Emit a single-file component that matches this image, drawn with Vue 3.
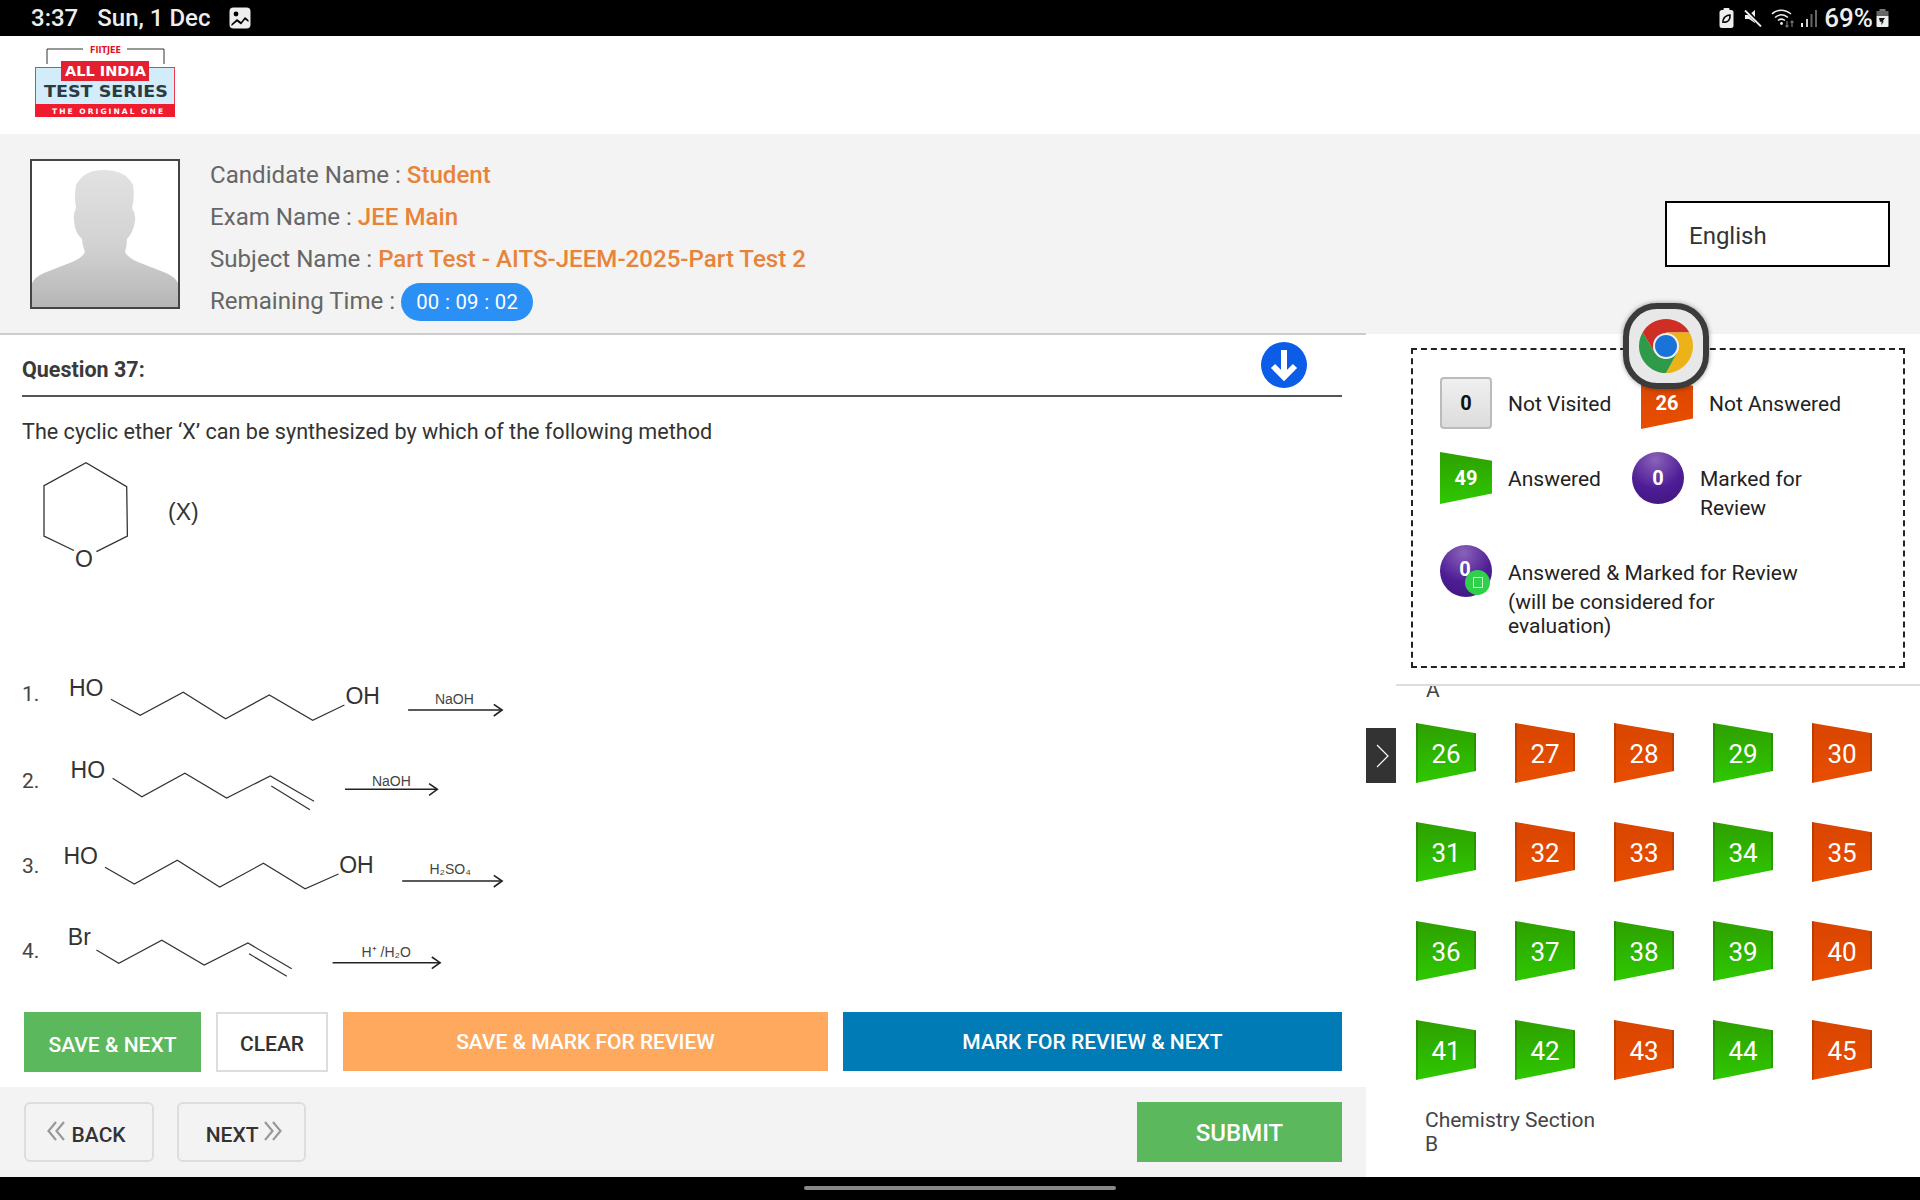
<script setup>
const greens = [26, 29, 31, 34, 36, 37, 38, 39, 41, 42, 44]
const palette = Array.from({ length: 20 }, (_, i) => ({
  n: 26 + i,
  ok: greens.includes(26 + i),
}))

const SX = 2.904
const SY = 3
const ROW_H = 85

// crop coordinates (measured on the reference) to pixels inside a row
function line(points, row) {
  return points.map(([x, y]) => `${(x / SX - 22).toFixed(1)},${(y / SY - row * ROW_H).toFixed(1)}`).join(' ')
}
function tx(x) {
  return (x / SX - 22).toFixed(1)
}
function ty(y, row) {
  return (y / SY - row * ROW_H).toFixed(1)
}
function arrow(x1, x2, y, row) {
  return {
    shaft: line([[x1, y], [x2, y]], row),
    head: line([[x2 - 24, y - 17], [x2, y], [x2 - 24, y + 18]], row),
  }
}

const options = [
  {
    n: '1.', numY: 122,
    group: 'HO', groupX: 200, groupY: 108,
    end: 'OH', endX: 1003, endY: 133,
    chain: [[322, 118], [407, 166], [532, 97], [655, 176], [782, 105], [908, 181], [1000, 135]],
    arrow: [1185, 1458, 150], reagent: 'NaOH', rX: 1263, rY: 133,
  },
  {
    n: '2.', numY: 385,
    group: 'HO', groupX: 205, groupY: 353,
    chain: [[327, 355], [412, 410], [537, 340], [658, 414], [785, 348], [912, 424]],
    dbl: [[788, 378], [900, 449]],
    arrow: [1002, 1270, 388], reagent: 'NaOH', rX: 1080, rY: 377,
  },
  {
    n: '3.', numY: 640,
    group: 'HO', groupX: 184, groupY: 613,
    end: 'OH', endX: 985, endY: 638,
    chain: [[305, 622], [390, 672], [515, 601], [638, 681], [765, 610], [886, 686], [983, 642]],
    arrow: [1168, 1458, 663], reagent: 'H₂SO₄', rX: 1247, rY: 643,
  },
  {
    n: '4.', numY: 895,
    group: 'Br', groupX: 197, groupY: 855,
    chain: [[280, 870], [345, 910], [470, 841], [593, 915], [720, 849], [847, 926]],
    dbl: [[723, 881], [833, 949]],
    arrow: [966, 1278, 908], reagent: 'H⁺ /H₂O', rX: 1050, rY: 890,
  },
].map((o, row) => ({ ...o, row, a: arrow(o.arrow[0], o.arrow[1], o.arrow[2], row) }))
</script>

<template>
  <div class="screen">
    <div class="status">
      <div class="status__left">
        <span>3:37</span>
        <span>Sun, 1 Dec</span>
        <svg width="22" height="22" viewBox="0 0 22 22">
          <rect x="0.5" y="0.5" width="21" height="21" rx="4" fill="#eee" />
          <circle cx="7" cy="7" r="2.4" fill="#000" />
          <path d="M2.5 17 L8 12 L12 15 L16 10 L19.5 13 V15 L16 12.5 L12 17.5 L8 14.5 L2.5 19 Z" fill="#000" />
        </svg>
      </div>
      <div class="status__right">
        <svg width="15" height="20" viewBox="0 0 15 20">
          <rect x="4.5" y="0" width="6" height="3" rx="1" fill="#eee" />
          <rect x="0.5" y="2" width="14" height="18" rx="2.5" fill="#eee" />
          <path d="M4 15 C3.5 9 8 7 11 7 C11.5 11 9 15 5 14" fill="none" stroke="#000" stroke-width="1.6" />
        </svg>
        <svg class="ml10" width="18" height="18" viewBox="0 0 18 18">
          <path d="M1 6 H5 L11 1 V14 L5 10 H1 Z" fill="#eee" />
          <path d="M2 1 L17 17" stroke="#000" stroke-width="3.4" />
          <path d="M1 1.5 L17 17.5" stroke="#eee" stroke-width="1.8" />
        </svg>
        <svg class="ml9" width="25" height="20" viewBox="0 0 25 20">
          <g fill="none" stroke="#eee" stroke-width="1.6">
            <path d="M1 6 C6 1 14 1 20 6" />
            <path d="M4 9.5 C8 6 13 6 17 9.5" />
            <path d="M7 12.5 C9.5 10.5 11.5 10.5 14 12.5" />
          </g>
          <circle cx="10.5" cy="15.5" r="1.4" fill="#eee" />
          <path d="M16 13 V19 M14.5 17.5 L16 19 L17.5 17.5" fill="none" stroke="#777" stroke-width="1.2" />
          <path d="M21 19 V13 M19.5 14.5 L21 13 L22.5 14.5" fill="none" stroke="#777" stroke-width="1.2" />
        </svg>
        <svg class="ml5" width="16" height="18" viewBox="0 0 16 18">
          <rect x="0" y="14" width="2" height="4" fill="#eee" />
          <rect x="5" y="10" width="2" height="8" fill="#ccc" />
          <rect x="9.5" y="5" width="2" height="13" fill="#666" />
          <rect x="14" y="1" width="2" height="17" fill="#666" />
        </svg>
        <span class="status__pct">69%</span>
        <svg class="ml3" width="13" height="18" viewBox="0 0 13 18">
          <rect x="3.5" y="0" width="6" height="2" fill="#777" />
          <rect x="0.5" y="2" width="12" height="6" fill="#666" />
          <rect x="0.5" y="7" width="12" height="11" rx="1" fill="#eee" />
          <path d="M3 9 H9 L6.5 12.5 H8 L5 16 L5.8 12.8 H4 Z" fill="#111" />
        </svg>
      </div>
    </div>

    <header class="brand">
      <svg width="142" height="76" viewBox="0 0 142 76">
        <path d="M12 18 V3 H48 M92 3 H129 V18" fill="none" stroke="#333" stroke-width="1" />
        <text class="lg lg--fiit" x="55" y="7" textLength="31" lengthAdjust="spacingAndGlyphs">FIITJEE</text>
        <rect x="0.5" y="21.5" width="139" height="49" fill="#d3ecfa" stroke="#ee3b4a" />
        <rect x="0" y="58" width="140" height="13" fill="#ee1c2e" />
        <rect x="26" y="15" width="88" height="20" fill="#e3202f" />
        <text class="lg lg--all" x="30" y="30" textLength="81" lengthAdjust="spacingAndGlyphs">ALL INDIA</text>
        <text class="lg lg--test" x="9" y="51" textLength="124" lengthAdjust="spacingAndGlyphs">TEST SERIES</text>
        <text class="lg lg--orig" x="17" y="68" textLength="111">THE ORIGINAL ONE</text>
      </svg>
    </header>

    <section class="info">
      <div class="avatar">
        <svg width="146" height="146" viewBox="0 0 146 146">
          <defs>
            <linearGradient id="sil" x1="0" y1="0" x2="0" y2="1">
              <stop offset="0" stop-color="#e2e2e2" />
              <stop offset="0.55" stop-color="#d2d2d2" />
              <stop offset="1" stop-color="#b6b6b6" />
            </linearGradient>
          </defs>
          <path
            d="M0 146 V122 Q3 116 12 112 L40 101 Q50 97 53 91 Q50 84 50 78 Q43 72 42 60 Q41 53 44 47 Q42 36 44 24 Q52 9 71 9 Q94 9 101 24 Q103 36 100 47 Q104 53 103 60 Q101 72 95 78 Q95 85 93 91 Q96 97 106 101 L134 112 Q143 116 146 122 V146 Z"
            fill="url(#sil)"
          />
        </svg>
      </div>
      <div class="details">
        <div class="details__row">Candidate Name : <b>Student</b></div>
        <div class="details__row">Exam Name : <b>JEE Main</b></div>
        <div class="details__row">Subject Name : <b>Part Test - AITS-JEEM-2025-Part Test 2</b></div>
        <div class="details__row">Remaining Time : <span class="timer">00 : 09 : 02</span></div>
      </div>
      <div class="lang">English</div>
    </section>

    <main class="main">
      <div class="left">
        <div class="qhead">
          <span class="qhead__title">Question 37:</span>
          <svg class="qhead__down" width="46" height="46" viewBox="0 0 46 46">
            <circle cx="23" cy="23" r="23" fill="#0b5ce6" />
            <path d="M23 8 V34 M12 24 L23 35 L34 24" fill="none" stroke="#fff" stroke-width="6" />
          </svg>
        </div>
        <p class="qtext">The cyclic ether ‘X’ can be synthesized by which of the following method</p>

        <svg class="ring" width="200" height="120" viewBox="22 460 200 120">
          <polyline
            points="74,550.5 44,536 44,485.7 86,462.7 126.7,486.7 127.4,536 96.4,551.7"
            fill="none" stroke="#333" stroke-width="1.3"
          />
          <text class="chem" x="75" y="566.5">O</text>
          <text class="chem" x="168" y="520">(X)</text>
        </svg>

        <div class="options">
          <svg v-for="o in options" :key="o.n" class="opt" width="500" :height="ROW_H" viewBox="0 0 500 85">
            <text class="opt__n" x="0" :y="ty(o.numY, o.row)">{{ o.n }}</text>
            <text class="chem" :x="tx(o.groupX)" :y="ty(o.groupY, o.row)">{{ o.group }}</text>
            <text v-if="o.end" class="chem" :x="tx(o.endX)" :y="ty(o.endY, o.row)">{{ o.end }}</text>
            <polyline :points="line(o.chain, o.row)" fill="none" stroke="#333" stroke-width="1.2" />
            <polyline v-if="o.dbl" :points="line(o.dbl, o.row)" fill="none" stroke="#333" stroke-width="1.2" />
            <polyline :points="o.a.shaft" fill="none" stroke="#222" stroke-width="1.6" />
            <polyline :points="o.a.head" fill="none" stroke="#222" stroke-width="1.6" />
            <text class="reagent" :x="tx(o.rX)" :y="ty(o.rY, o.row)">{{ o.reagent }}</text>
          </svg>
        </div>

        <div class="actions">
          <button class="btn btn--green btn--save">SAVE &amp; NEXT</button>
          <button class="btn btn--clear">CLEAR</button>
          <button class="btn btn--orange">SAVE &amp; MARK FOR REVIEW</button>
          <button class="btn btn--blue">MARK FOR REVIEW &amp; NEXT</button>
        </div>

        <div class="footer">
          <button class="btn btn--nav btn--back">
            <svg class="chev" width="19" height="20" viewBox="0 0 19 20">
              <path d="M9 1 L1.5 10 L9 19 M17 1 L9.5 10 L17 19" fill="none" stroke="#999" stroke-width="2.2" />
            </svg>
            BACK
          </button>
          <button class="btn btn--nav btn--next">
            NEXT
            <svg class="chev" width="19" height="20" viewBox="0 0 19 20">
              <path d="M2 1 L9.5 10 L2 19 M10 1 L17.5 10 L10 19" fill="none" stroke="#999" stroke-width="2.2" />
            </svg>
          </button>
          <button class="btn btn--green btn--submit">SUBMIT</button>
        </div>
      </div>

      <aside class="right">
        <button class="toggle" aria-label="Collapse">
          <svg width="14" height="24" viewBox="0 0 14 24">
            <path d="M1 1 L12 12 L1 23" fill="none" stroke="#fff" stroke-width="1.2" />
          </svg>
        </button>

        <div class="legend">
          <div class="legend__row">
            <div class="item item--first">
              <span class="tag tag--none">0</span>
              <span class="item__label">Not Visited</span>
            </div>
            <div class="item">
              <span class="tag tag--red tag--small">26</span>
              <span class="item__label">Not Answered</span>
            </div>
          </div>
          <div class="legend__row legend__row--two">
            <div class="item item--second">
              <span class="tag tag--green tag--small">49</span>
              <span class="item__label">Answered</span>
            </div>
            <div class="item item--top">
              <span class="tag tag--purple">0</span>
              <span class="item__wrap">Marked for Review</span>
            </div>
          </div>
          <div class="legend__row legend__row--three">
            <div class="item item--top">
              <span class="tag tag--purple tag--badge">
                <span class="tag__zero">0</span>
                <span class="badge"><i></i></span>
              </span>
              <div class="item__long">
                <div>Answered &amp; Marked for Review</div>
                <div class="item__note">(will be considered for evaluation)</div>
              </div>
            </div>
          </div>
        </div>

        <div class="palette">
          <div class="palette__inner">
            <div class="section section--a">A</div>
            <div class="grid">
              <span v-for="p in palette" :key="p.n" class="cell" :class="p.ok ? 'cell--ok' : 'cell--no'">{{ p.n }}</span>
            </div>
            <div class="section section--next">Chemistry Section B</div>
          </div>
        </div>
      </aside>
    </main>

    <div class="navbar"><span class="navbar__pill"></span></div>

    <div class="bubble">
      <svg width="58" height="58" viewBox="-29 -29 58 58">
        <path d="M-23.4 -13.5 A27 27 0 0 1 23.4 -13.5 L0 -13.5 L-11.3 6.5 Z" fill="#cf2e24" />
        <path d="M23.4 -13.5 A27 27 0 0 1 0 27 L11.3 6.5 L0 -13.5 Z" fill="#ecb318" />
        <path d="M0 27 A27 27 0 0 1 -23.4 -13.5 L-11.3 6.5 L11.3 6.5 Z" fill="#2f9a47" />
        <circle r="13" fill="#f1f1f1" />
        <circle r="11" fill="#1a73d8" />
      </svg>
    </div>
  </div>
</template>

<style>
html,
body {
  margin: 0;
  background: #000;
}
</style>

<style scoped>
.screen {
  position: relative;
  width: 1920px;
  height: 1200px;
  overflow: hidden;
  display: flex;
  flex-direction: column;
  background: #fff;
  font-family: Roboto, "Liberation Sans", sans-serif;
  color: #333;
}

.status {
  height: 36px;
  flex: none;
  background: #000;
  color: #eee;
  display: flex;
  align-items: center;
  justify-content: space-between;
  padding: 0 31px;
  font-size: 24px;
  font-weight: 500;
  box-sizing: border-box;
}
.status__left {
  display: flex;
  align-items: center;
  gap: 19px;
}
.status__right {
  display: flex;
  align-items: center;
}
.status__pct {
  margin-left: 7px;
  font-size: 26px;
}
.ml3 { margin-left: 3px; }
.ml5 { margin-left: 5px; }
.ml9 { margin-left: 9px; }
.ml10 { margin-left: 10px; }

.brand {
  height: 98px;
  flex: none;
  padding: 10px 0 0 35px;
  box-sizing: border-box;
}
.lg {
  font-family: "DejaVu Sans", sans-serif;
  font-weight: 700;
}
.lg--fiit { font-size: 8px; fill: #e2121f; }
.lg--all { font-size: 14px; fill: #fff; }
.lg--test { font-size: 15px; fill: #2d3a40; }
.lg--orig { font-size: 7.5px; fill: #fff; }

.info {
  height: 200px;
  flex: none;
  background: #f3f3f3;
  display: flex;
  padding: 25px 30px 0;
  box-sizing: border-box;
}
.avatar {
  width: 146px;
  height: 146px;
  border: 2px solid #444;
  background: #fff;
}
.avatar svg {
  display: block;
}
.details {
  margin-left: 30px;
  font-size: 24.1px;
  color: #666;
}
.details__row {
  height: 42px;
  line-height: 32px;
}
.details b {
  color: #e8833a;
  font-weight: 500;
}
.timer {
  display: inline-block;
  margin-top: -2px;
  background: #2b90f5;
  color: #fff;
  border-radius: 19px;
  font-size: 20.3px;
  line-height: 38px;
  padding: 0 15px;
  vertical-align: top;
  letter-spacing: 0.3px;
}
.lang {
  margin: 42px 0 0 auto;
  width: 225px;
  height: 66px;
  box-sizing: border-box;
  border: 2px solid #000;
  background: #fff;
  font-size: 24px;
  line-height: 66px;
  padding-left: 22px;
  color: #333;
}

.main {
  flex: 1;
  display: flex;
  min-height: 0;
}
.left {
  width: 1366px;
  flex: none;
  border-top: 2px solid #ccc;
  margin-top: -1px;
  box-sizing: border-box;
  display: flex;
  flex-direction: column;
}
.qhead {
  height: 62px;
  flex: none;
  margin: 0 24px 0 22px;
  border-bottom: 2px solid #555;
  display: flex;
  align-items: center;
  justify-content: space-between;
  box-sizing: border-box;
  position: relative;
}
.qhead__title {
  font-size: 21.5px;
  font-weight: 700;
  color: #3a3a3a;
  margin-top: 8px;
}
.qhead__down {
  position: absolute;
  left: 1239px;
  top: 7px;
}
.qtext {
  margin: 23px 0 0 22px;
  font-size: 21.6px;
  line-height: 24px;
  color: #333;
}
.ring {
  display: block;
  flex: none;
  margin: 16px 0 0 22px;
}
.chem {
  font-family: "Liberation Sans", Arial, sans-serif;
  font-size: 23px;
  fill: #333;
}
.options {
  margin: 80px 0 0 22px;
  display: flex;
  flex-direction: column;
}
.opt {
  display: block;
  flex: none;
}
.opt__n {
  font-family: Roboto, sans-serif;
  font-size: 21px;
  fill: #444;
}
.reagent {
  font-family: "Liberation Sans", Arial, sans-serif;
  font-size: 14px;
  fill: #444;
}

.actions {
  margin-top: 12px;
  height: 60px;
  flex: none;
  padding-left: 24px;
  display: flex;
}
.btn {
  font-family: Roboto, sans-serif;
  font-weight: 500;
  font-size: 21px;
  border: 0;
  padding: 0;
  box-sizing: border-box;
  cursor: pointer;
}
.btn--green { background: #5cb85c; color: #fff; }
.btn--save {
  width: 177px;
  padding-top: 6px;
}
.btn--clear {
  width: 112px;
  margin-left: 15px;
  background: #fff;
  border: 2px solid #ddd;
  color: #333;
  padding-top: 4px;
}
.btn--orange {
  width: 485px;
  height: 59px;
  margin-left: 15px;
  background: #ffa95e;
  color: #fff;
}
.btn--blue {
  width: 499px;
  height: 59px;
  margin-left: 15px;
  background: #007bb5;
  color: #fff;
}
.footer {
  margin-top: 15px;
  flex: 1;
  background: #f3f3f3;
  padding: 15px 24px 0;
  display: flex;
  align-items: flex-start;
}
.btn--nav {
  height: 60px;
  background: #f3f3f3;
  border: 2px solid #ddd;
  border-radius: 6px;
  color: #333;
  padding-top: 3px;
}
.btn--back { width: 130px; padding-right: 5px; }
.btn--next { width: 129px; margin-left: 23px; padding-left: 5px; }
.chev {
  vertical-align: 1px;
}
.btn--submit {
  width: 205px;
  height: 60px;
  margin-left: auto;
  font-size: 24px;
  padding-top: 2px;
}

.right {
  position: relative;
  flex: 1;
  min-width: 0;
}
.toggle {
  position: absolute;
  left: 0;
  top: 394px;
  width: 30px;
  height: 55px;
  border: 0;
  padding: 0 0 0 3px;
  background: #333;
  display: flex;
  align-items: center;
  justify-content: center;
}
.legend {
  margin: 14px 15px 0 45px;
  height: 320px;
  box-sizing: border-box;
  border: 2px dashed #222;
  padding: 27px 0 0 27px;
  font-size: 21px;
  color: #222;
}
.legend__row {
  display: flex;
  align-items: flex-start;
}
.legend__row--two { margin-top: 23px; }
.legend__row--three { margin-top: 22px; }
.item {
  display: flex;
  align-items: center;
  gap: 16px;
}
.item--first { width: 201px; }
.item--second { width: 192px; }
.item--top { align-items: flex-start; }
.item__label {
  padding-top: 2px;
}
.tag {
  width: 52px;
  height: 52px;
  flex: none;
  box-sizing: border-box;
  display: flex;
  align-items: center;
  justify-content: center;
  font-size: 20px;
  font-weight: 700;
  color: #fff;
}
.tag--none {
  background: linear-gradient(#f0f0f0, #dcdcdc);
  border: 2px solid #bbb;
  border-radius: 4px;
  color: #111;
}
.tag--small {
  clip-path: polygon(0 0, 100% 17%, 100% 80%, 0 100%);
}
.tag--red { background: linear-gradient(#d94600, #e84e00); }
.tag--green { background: linear-gradient(#2ea000, #2ec800); }
.tag--purple {
  border-radius: 50%;
  background: radial-gradient(circle at 45% 15%, #8a62b8, #4e1d96 55%, #3d1478 100%);
  position: relative;
}
.tag__zero {
  position: relative;
  left: -1px;
  top: -2px;
}
.badge {
  position: absolute;
  left: 25px;
  top: 25px;
  width: 25px;
  height: 25px;
  border-radius: 50%;
  background: #2fd14a;
  display: flex;
  align-items: center;
  justify-content: center;
}
.badge i {
  width: 10px;
  height: 11px;
  border: 1.5px solid #c9f5cf;
  box-sizing: border-box;
}
.item__wrap {
  width: 130px;
  line-height: 29px;
  margin-top: 13px;
}
.item__long {
  margin-top: 16px;
  width: 320px;
  line-height: 24px;
}
.item__note {
  margin-top: 5px;
  width: 260px;
}

.palette {
  margin: 16px 0 0 30px;
  border-top: 2px solid #ddd;
  height: 490px;
  overflow: hidden;
}
.palette__inner {
  margin-top: -8px;
  padding-left: 29px;
  font-size: 21px;
  color: #444;
}
.section {
  line-height: 24px;
}
.section--a {
  padding-left: 1px;
}
.section--next {
  margin-top: 28px;
  width: 180px;
}
.grid {
  margin: 21px 0 0 -9px;
  display: grid;
  grid-template-columns: repeat(5, 60px);
  grid-auto-rows: 60px;
  gap: 39px;
}
.cell {
  display: flex;
  align-items: center;
  justify-content: center;
  font-size: 26px;
  padding-top: 2px;
  box-sizing: border-box;
  color: #fff;
  clip-path: polygon(0 0, 100% 17%, 100% 80%, 0 100%);
  box-shadow: inset 2px 0 0 rgba(0, 0, 0, 0.15), inset -2px 0 0 rgba(0, 0, 0, 0.15);
}
.cell--ok {
  background: linear-gradient(#2ea000, #2ec800);
}
.cell--no {
  background: linear-gradient(#d94600, #e84e00);
}

.navbar {
  height: 23px;
  flex: none;
  background: #000;
  position: relative;
}
.navbar__pill {
  position: absolute;
  left: 804px;
  top: 9px;
  width: 312px;
  height: 4px;
  border-radius: 2px;
  background: #888;
}
.bubble {
  position: absolute;
  left: 1623px;
  top: 303px;
  width: 86px;
  height: 86px;
  box-sizing: border-box;
  border: 6px solid #3b3b3b;
  border-radius: 34px;
  background: #e8e8e8;
  box-shadow: 0 0 5px rgba(0, 0, 0, 0.4);
  display: flex;
  align-items: center;
  justify-content: center;
}
</style>
